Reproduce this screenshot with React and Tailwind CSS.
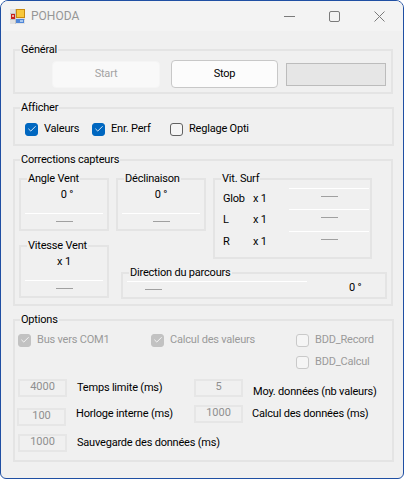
import { Check } from 'lucide-react';

function GroupBox({ title, className, labelClass = 'left-[5px]', children }) {
  return (
    <div className={`relative border-2 border-[#e4e4e4] ${className}`}>
      <span className={`absolute -top-[9px] bg-[#f0f0f0] px-[1px] leading-[16px] whitespace-nowrap text-black ${labelClass}`}>{title}</span>
      {children}
    </div>
  );
}

function CheckBox({ label, checked, disabled, className = '' }) {
  const box = checked
    ? disabled
      ? 'bg-[#c2c2c2] border-[#c2c2c2]'
      : 'bg-[#0067c0] border-[#0067c0]'
    : disabled
      ? 'border-[#c9c9c9] bg-[#f5f5f5]'
      : 'border-[#616161] bg-[#f5f5f5]';
  return (
    <div className={`flex items-center gap-[6px] whitespace-nowrap ${className}`}>
      <div className={`flex h-[13px] w-[13px] shrink-0 items-center justify-center rounded-[3px] border ${box}`}>
        {checked && <Check className="h-[10px] w-[10px] shrink-0 text-white" strokeWidth={2} />}
      </div>
      <span className={disabled ? 'text-[#9a9a9a]' : 'text-black'}>{label}</span>
    </div>
  );
}

function Dash({ className = '' }) {
  return <div className={`h-px w-[17px] bg-[#a0a0a0] ${className}`} />;
}

function SensorBox({ title, value, valueClass = '' }) {
  return (
    <GroupBox title={title} className="h-[53px] w-[90px]" labelClass="left-[6px]">
      <div className={`pt-[7px] text-center leading-[16px] text-black ${valueClass}`}>{value}</div>
      <div className="mx-[4px] mt-[10px] h-px bg-white" />
      <Dash className="mx-auto mt-[7px]" />
    </GroupBox>
  );
}

function SurfRow({ name, className = '' }) {
  return (
    <div className={`flex h-[21px] text-black ${className}`}>
      <span className="w-[38px] pl-[8px] pt-[3px]">{name}</span>
      <span className="w-[36px] pt-[3px]">x 1</span>
      <div className="flex w-[80px] flex-col border-t border-white pt-[7px]">
        <Dash className="mx-auto" />
      </div>
    </div>
  );
}

function NumField({ value, className = '' }) {
  return (
    <div className={`flex h-[18px] w-[49px] shrink-0 items-center justify-center border-2 border-[#e6e6e6] bg-[#f0f0f0] tracking-normal text-[#8f8f8f] ${className}`}>
      {value}
    </div>
  );
}

export default function App() {
  return (
    <div
      className="flex h-[479px] w-[404px] flex-col overflow-hidden rounded-t-[8px] rounded-b-[6px] border border-[#1f4fa3] bg-[#f0f0f0] text-[11px] tracking-[-0.2px]"
      style={{ fontFamily: 'Roboto, "Liberation Sans", sans-serif' }}
    >
      <div className="flex h-[30px] shrink-0 items-center bg-[#f3f3f3] pl-[9px] text-[12px] tracking-normal">
        <svg width="15" height="15" viewBox="0 0 15 15" className="shrink-0">
          <path d="M0 0H15V15H0Z" fill="#e2e2e2" />
          <path d="M0 4.5H15M0 10.5H15M5.5 0V15" stroke="#c4c4c4" />
          <rect x="1" y="5" width="4" height="5" fill="#c8201c" />
          <rect x="2" y="6" width="2" height="2" fill="#f3b0a0" />
          <rect x="6" y="0" width="9" height="9" fill="#c98a10" />
          <rect x="7" y="1" width="7" height="7" fill="#f8c83c" />
          <rect x="6" y="10" width="8" height="4" fill="#4f86d8" />
          <rect x="10" y="11" width="3" height="2" fill="#a8c8f0" />
        </svg>
        <span className="ml-[6px] text-[#969696]">POHODA</span>
        <div className="ml-auto flex items-center pr-[18px]">
          <svg width="11" height="11" viewBox="0 0 11 11" className="mr-[34px]">
            <path d="M0 5.5H11" stroke="#7a7a7a" />
          </svg>
          <svg width="11" height="11" viewBox="0 0 11 11" className="mr-[34px]">
            <rect x="0.5" y="0.5" width="10" height="10" rx="1.5" fill="none" stroke="#7a7a7a" />
          </svg>
          <svg width="11" height="11" viewBox="0 0 11 11">
            <path d="M0.5 0.5L10.5 10.5M10.5 0.5L0.5 10.5" stroke="#7a7a7a" />
          </svg>
        </div>
      </div>

      <div className="flex flex-col px-[12px] pt-[18px]">
        <GroupBox title="Général" className="h-[45px] w-[380px]">
          <div className="flex items-center pt-[9px] pl-[37px]">
            <div className="flex h-[27px] w-[108px] items-center justify-center rounded-[4px] border border-[#f5f5f5] bg-[#f9f9f9] text-[#a3a3a3]">Start</div>
            <div className="ml-[11px] flex h-[28px] w-[107px] items-center justify-center rounded-[4px] border border-[#c8c8c8] bg-[#fcfcfc] text-black">Stop</div>
            <div className="ml-[8px] h-[23px] w-[100px] border border-[#bcbcbc] bg-[#e6e6e6]" />
          </div>
        </GroupBox>

        <GroupBox title="Afficher" className="mt-[13px] h-[39px] w-[381px]">
          <div className="flex pt-[12px] pl-[10px]">
            <CheckBox label="Valeurs" checked className="w-[67px]" />
            <CheckBox label="Enr. Perf" checked className="w-[78px]" />
            <CheckBox label="Reglage Opti" />
          </div>
        </GroupBox>

        <GroupBox title="Corrections capteurs" className="mt-[13px] h-[147px] w-[380px]">
          <div className="flex pt-[17px] pl-[4px]">
            <div className="flex w-[90px] flex-col gap-[14px]">
              <SensorBox title="Angle Vent" value="0 °" valueClass="pl-[6px]" />
              <SensorBox title="Vitesse Vent" value="x 1" />
            </div>
            <div className="ml-[7px] flex flex-col">
              <div className="flex gap-[7px]">
                <SensorBox title="Déclinaison" value="0 °" />
                <GroupBox title="Vit. Surf" className="h-[81px] w-[159px]" labelClass="left-[6px]">
                  <div className="flex flex-col pt-[8px]">
                    <SurfRow name="Glob" />
                    <SurfRow name="L" />
                    <SurfRow name="R" className="mt-[1px]" />
                  </div>
                </GroupBox>
              </div>
              <GroupBox title="Direction du parcours" className="mt-[13px] ml-[5px] h-[27px] w-[266px]" labelClass="left-[6px]">
                <div className="flex">
                  <div className="ml-[4px] w-[180px] pt-[7px]">
                    <div className="h-px bg-white" />
                    <Dash className="mt-[7px] ml-[18px]" />
                  </div>
                  <span className="ml-[42px] pt-[6px] text-black">0 °</span>
                </div>
              </GroupBox>
            </div>
          </div>
        </GroupBox>

        <GroupBox title="Options" className="mt-[13px] h-[143px] w-[381px]">
          <div className="flex pt-[11px] pl-[3px]">
            <CheckBox label="Bus vers COM1" checked disabled className="self-start w-[133px]" />
            <CheckBox label="Calcul des valeurs" checked disabled className="self-start w-[145px]" />
            <div className="flex flex-col gap-[5.5px]">
              <CheckBox label="BDD_Record" disabled />
              <CheckBox label="BDD_Calcul" disabled />
            </div>
          </div>
          <div className="flex flex-col pt-[8px] pl-[3px]">
            <div className="flex h-[18px] items-start">
              <NumField value="4000" />
              <span className="ml-[10px] mt-[1px] w-[117px] text-black">Temps limite (ms)</span>
              <NumField value="5" />
              <span className="ml-[10px] mt-[5px] whitespace-nowrap text-black">Moy. données (nb valeurs)</span>
            </div>
            <div className="mt-[8px] flex h-[21px] items-start">
              <NumField value="100" className="-ml-[1px] mt-[3px]" />
              <span className="ml-[10px] mt-[1px] w-[118px] text-black">Horloge interne (ms)</span>
              <NumField value="1000" />
              <span className="ml-[9px] mt-[1px] whitespace-nowrap text-black">Calcul des données (ms)</span>
            </div>
            <div className="mt-[8px] flex h-[18px] items-start">
              <NumField value="1000" />
              <span className="ml-[10px] mt-[1px] whitespace-nowrap text-black">Sauvegarde des données (ms)</span>
            </div>
          </div>
        </GroupBox>
      </div>
    </div>
  );
}
